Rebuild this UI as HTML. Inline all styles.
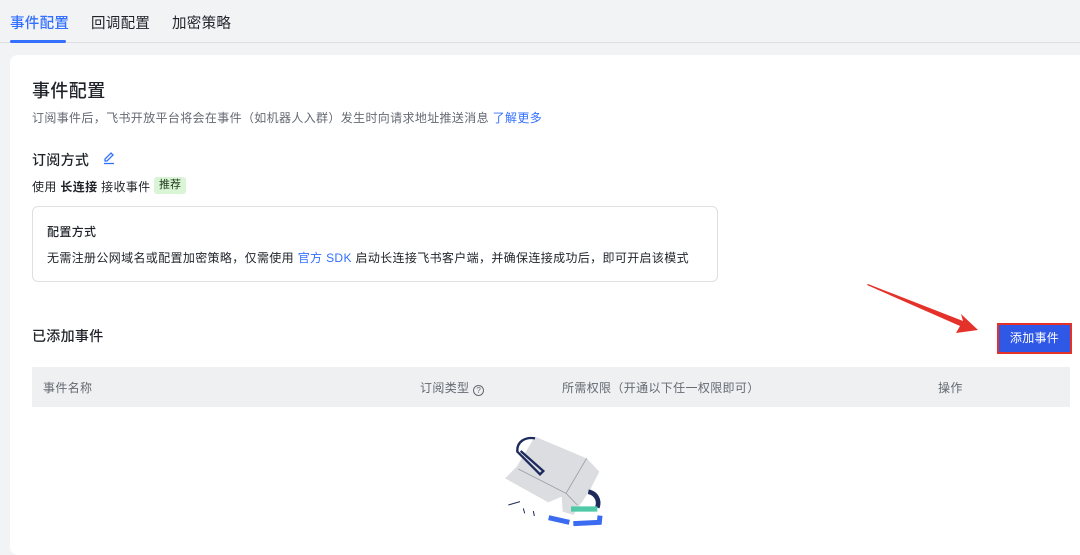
<!DOCTYPE html>
<html><head><meta charset="utf-8"><style>
*{margin:0;padding:0;box-sizing:border-box}
body{width:1080px;height:537px;overflow:hidden;background:#f2f3f5;font-family:"Liberation Sans","Noto Sans CJK SC",sans-serif;color:#1f2329;position:relative}
.a{position:absolute;white-space:nowrap}
.tab{font-size:14.5px;top:12px;letter-spacing:0.3px}
.card{position:absolute;left:10px;top:55px;width:1090px;height:500px;background:#fff;border-radius:8px}
.blue{color:#3370ff}
.s12{font-size:12px;letter-spacing:0.35px}
</style></head><body>
<div class="a tab" style="left:10px;color:#3370ff;font-weight:500">事件配置</div>
<div class="a tab" style="left:91px;color:#1f2329">回调配置</div>
<div class="a tab" style="left:172px;color:#1f2329">加密策略</div>
<div class="a" style="left:0;top:42px;width:1080px;height:1px;background:#dee0e3"></div>
<div class="a" style="left:10px;top:40px;width:56px;height:3px;border-radius:2px;background:#3370ff"></div>
<div class="card"></div>
<div class="a" style="left:32px;top:77px;font-size:18px;font-weight:500;letter-spacing:0.4px">事件配置</div>
<div class="a s12" style="left:32px;top:109px;color:#646a73">订阅事件后，飞书开放平台将会在事件（如机器人入群）发生时向请求地址推送消息 <span class="blue">了解更多</span></div>
<div class="a" style="left:32px;top:150px;font-size:14px;font-weight:500;letter-spacing:0.3px">订阅方式</div>
<svg class="a" style="left:102px;top:151px" width="14" height="14" viewBox="0 0 14 14"><path d="M3 10 L3 8 L9 2 L11 4 L5 10 Z" fill="none" stroke="#3370ff" stroke-width="1.3"/><path d="M2 12.5 H12" stroke="#3370ff" stroke-width="1.3"/></svg>
<div class="a s12" style="left:32px;top:178px;color:#1f2329">使用 <b style="font-weight:600">长连接</b> 接收事件</div>
<div class="a" style="left:154px;top:177px;font-size:11px;background:#d9f5d6;color:#24391f;padding:1px 5px;border-radius:3px;line-height:15px">推荐</div>
<div class="a" style="left:32px;top:206px;width:686px;height:76px;border:1px solid #dee0e3;border-radius:6px"></div>
<div class="a s12" style="left:47px;top:223px;font-weight:500">配置方式</div>
<div class="a s12" style="left:47px;top:249px;color:#1f2329">无需注册公网域名或配置加密策略，仅需使用 <span class="blue">官方 SDK</span> 启动长连接飞书客户端，并确保连接成功后，即可开启该模式</div>
<div class="a" style="left:32px;top:326px;font-size:14px;font-weight:500;letter-spacing:0.3px">已添加事件</div>
<div class="a" style="left:997px;top:323px;width:75px;height:31px;border:2px solid #e4322b;background:#2f58e6;color:#fff;font-size:12px;text-align:center;line-height:27px;letter-spacing:0.3px">添加事件</div>
<svg class="a" style="left:860px;top:278px" width="125" height="60"><polygon points="8,6 103,43 101,36 118,52 96,55 100,48 7,7" fill="#e4322b"/></svg>
<div class="a" style="left:32px;top:367px;width:1038px;height:40px;background:#eff0f1"></div>
<div class="a s12" style="left:43px;top:379px;color:#646a73">事件名称</div>
<div class="a s12" style="left:420px;top:379px;color:#646a73">订阅类型 <span style="display:inline-block;width:11px;height:11px;border:1px solid #646a73;border-radius:50%;font-size:8px;line-height:9px;text-align:center;vertical-align:-1px;letter-spacing:0">?</span></div>
<div class="a s12" style="left:562px;top:379px;color:#646a73">所需权限（开通以下任一权限即可）</div>
<div class="a s12" style="left:938px;top:379px;color:#646a73">操作</div>
<svg class="a" style="left:490px;top:425px" width="130" height="112" viewBox="0 0 390 336">
<polygon points="135,35 290,100 328,140 300,195 250,270 218,260 215,215 175,232 45,160 80,125" fill="#dcdde1"/>
<path d="M85,132 L228,205 L290,100 M228,205 L262,240" stroke="#9a9da5" stroke-width="2.5" fill="none"/>
<path d="M135,40 C105,35 80,50 82,80 L150,148 L160,138 L92,78" fill="none" stroke="#1d2a5c" stroke-width="7"/>
<path d="M295,200 C318,205 330,225 322,248" stroke="#1d2a5c" stroke-width="14" fill="none"/>
<path d="M243,252 L322,252" stroke="#4fc9a8" stroke-width="16"/>
<path d="M176,278 L238,292 M250,296 L328,292 L330,272" stroke="#3a6bf0" stroke-width="15" fill="none"/>
<path d="M55,240 L90,230 M100,250 L104,265 M130,258 L133,273" stroke="#1d2a5c" stroke-width="3"/>
</svg>
</body></html>
